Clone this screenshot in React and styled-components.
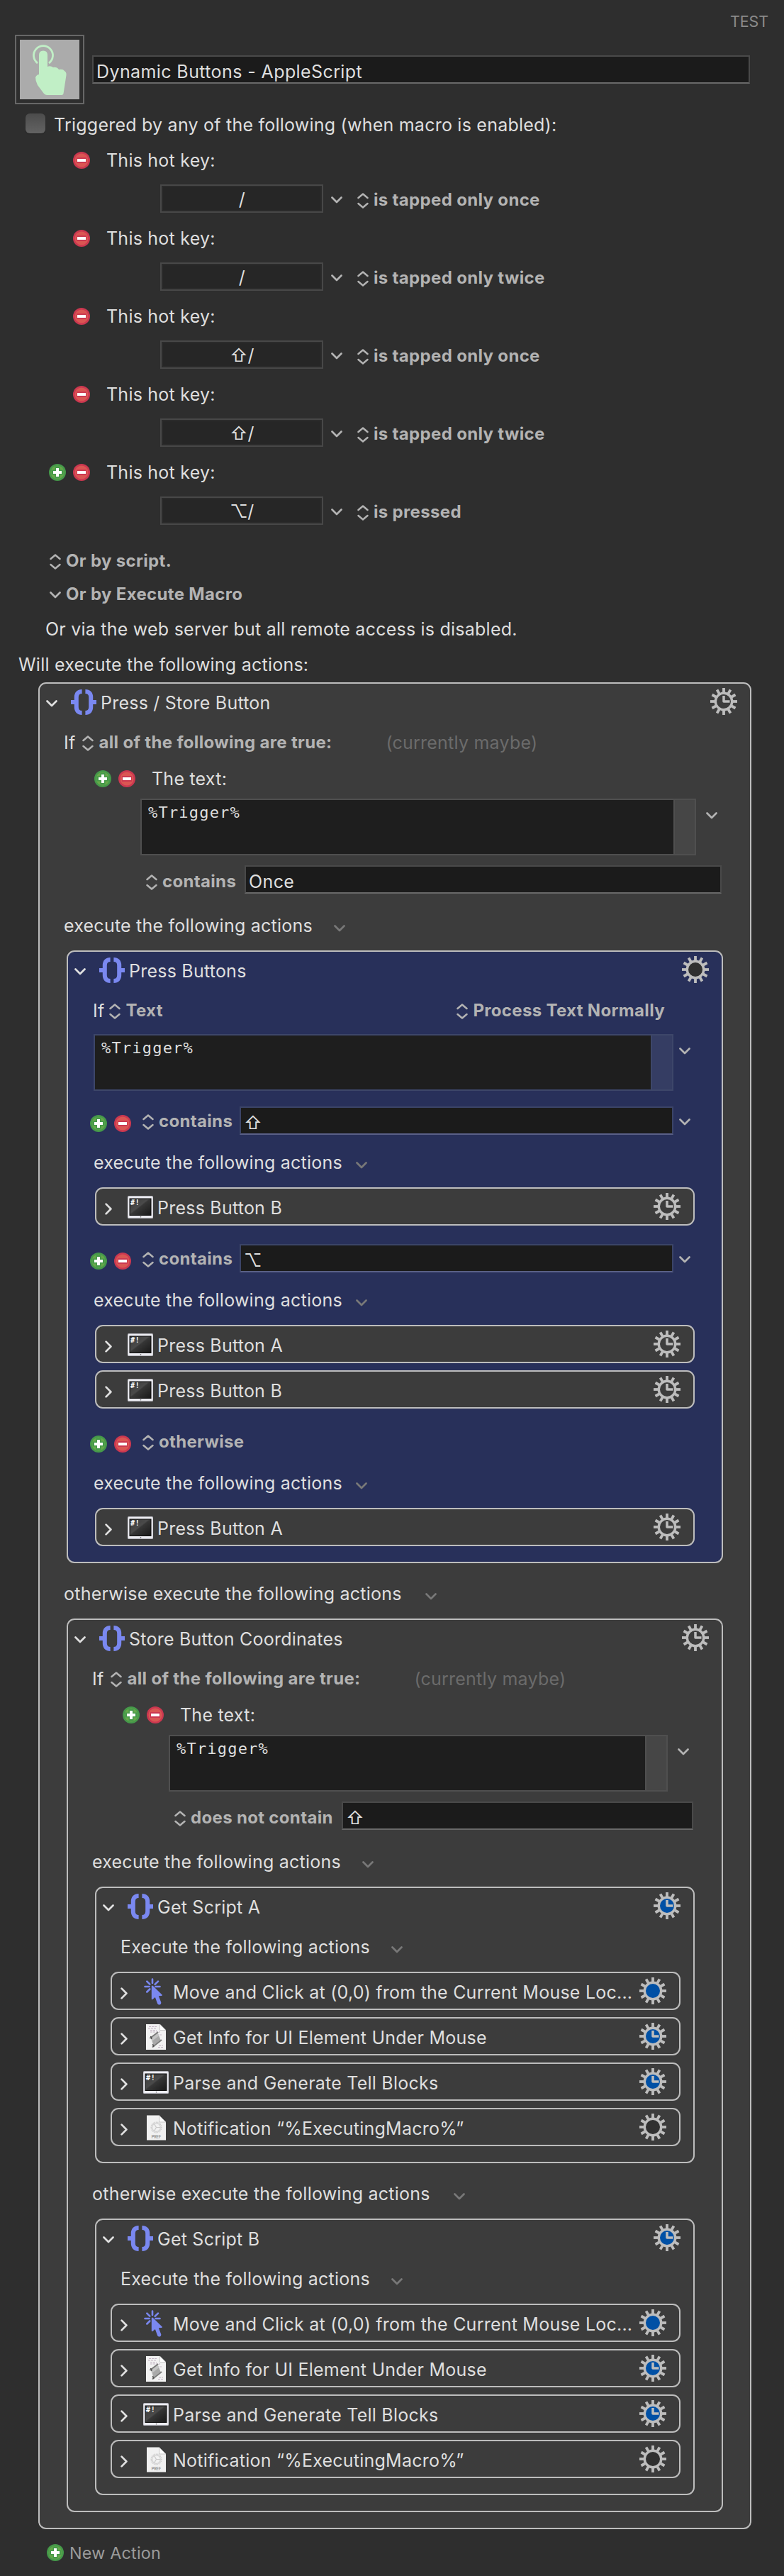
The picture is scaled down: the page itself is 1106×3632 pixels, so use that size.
import React from 'react';
import styled, { createGlobalStyle, css } from 'styled-components';

const GlobalStyle = createGlobalStyle`
  *, *::before, *::after { box-sizing: border-box; }
  body { margin: 0; background: #2e2e2e; }
`;

const Page = styled.main`
  width: 1106px;
  height: 3632px;
  overflow: hidden;
  background: #2e2e2e;
  color: #dfdfdf;
  font-family: Inter, "DejaVu Sans", sans-serif;
  font-size: 25px;
  letter-spacing: 0.23px;
  line-height: 30px;
  white-space: nowrap;
`;

const GroupName = styled.div`
  height: 49px;
  padding: 15px 22px 0 0;
  text-align: right;
  font-size: 21.5px;
  letter-spacing: -0.1px;
  color: #8b8b8b;
`;

const TitleRow = styled.header`
  display: flex;
  align-items: center;
  gap: 11px;
  height: 98px;
  padding-left: 21px;
`;

const IconWell = styled.div`
  display: flex;
  align-items: center;
  justify-content: center;
  width: 98px;
  height: 98px;
  border: 2px solid #676767;
`;

const IconPlate = styled.div`
  width: 84px;
  height: 84px;
  background: #ababab;
`;

const fieldTone = {
  grey: { line: '#494949', base: '#696969', area: '#4f4f4f', bar: '#464646' },
  blue: { line: '#3b4467', base: '#5a6087', area: '#3d4669', bar: '#353d63' },
};

const Field = styled.div`
  display: flex;
  align-items: center;
  width: ${(p) => p.$w}px;
  height: 40px;
  padding: 5px 0 0 4px;
  border: 2px solid ${(p) => fieldTone[p.$tone || 'grey'].line};
  border-bottom-color: ${(p) => fieldTone[p.$tone || 'grey'].base};
  background: #1b1b1b;
  letter-spacing: 0.4px;
`;

const HotKeyField = styled.div`
  display: flex;
  align-items: center;
  justify-content: center;
  width: 230px;
  height: 40px;
  padding-top: 2px;
  border: 2px solid #484848;
  background: #262626;
  box-shadow: inset 0 0 0 2px #2b2b2b;
  letter-spacing: -0.5px;
`;

const Line = styled.div`
  display: flex;
  align-items: center;
  flex: none;
  height: ${(p) => p.$h}px;
  padding-top: ${(p) => p.$top || 0}px;
  padding-bottom: ${(p) => p.$bottom || 0}px;
  padding-left: ${(p) => p.$x || 0}px;
`;

const Checkbox = styled.span`
  width: 28px;
  height: 28px;
  margin: 0 12px 4px 0;
  border-radius: 6px;
  background: linear-gradient(#4c4c4c, #636363);
  box-shadow: 0 1px 1px #262626;
`;

const MenuRoot = styled.span`
  display: inline-flex;
  align-items: center;
  gap: 7px;
  margin-left: ${(p) => p.$ml || 0}px;
  padding-top: ${(p) => p.$drop || 0}px;
  font-size: 24px;
  font-weight: 700;
  letter-spacing: 0.33px;
  color: #b3b3b3;
`;

const Gap = styled.span`
  flex: none;
  width: ${(p) => p.$w}px;
`;

const Push = styled.span`
  flex: 1;
`;

const Dim = styled.span`
  margin-left: 76px;
  color: #6b6b6b;
`;

const Glyph = styled.svg`
  display: block;
  flex: none;
  margin-top: ${(p) => p.$mt || 0}px;
  margin-left: ${(p) => p.$ml || 0}px;
`;

const Stack = styled.div`
  margin-left: ${(p) => p.$x}px;
  display: flex;
  align-items: center;
`;

const TextArea = styled.div`
  display: flex;
  width: ${(p) => p.$w}px;
  height: 80px;
  border: 2px solid ${(p) => fieldTone[p.$tone].area};
  background: #1e1e1e;
`;

const AreaText = styled.div`
  flex: 1;
  padding: 3px 0 0 9px;
  font-family: "DejaVu Sans Mono", monospace;
  font-size: 22px;
  letter-spacing: 1.2px;
`;

const AreaScroller = styled.div`
  width: 30px;
  border-left: 2px solid ${(p) => fieldTone[p.$tone].area};
  background: ${(p) => fieldTone[p.$tone].bar};
`;

const Card = styled.section`
  border: 2px solid #bdbdbd;
  border-radius: 11px;
  background: ${(p) => (p.$selected ? '#28305a' : '#3c3c3c')};
  margin: 0 ${(p) => p.$mr ?? p.$mx}px 0 ${(p) => p.$mx}px;
  ${(p) => p.$outer && css`
    width: 1006px;
    margin: 0 0 0 54px;
  `}
`;

const CardHead = styled.div`
  display: flex;
  align-items: center;
  height: 50px;
  margin-bottom: ${(p) => (p.$closed ? 0 : 2)}px;
  padding: 0 18px 0 9px;
`;

const Disclosure = styled.span`
  display: flex;
  justify-content: center;
  width: 16px;
  padding-top: 6px;
`;

const IconCell = styled.span`
  display: flex;
  align-items: center;
  justify-content: center;
  width: 36px;
  height: 38px;
  margin: 2px 6px 0 19px;
`;

const Title = styled.span`
  flex: 1;
  padding-top: 4px;
`;

const List = styled.div`
  display: flex;
  flex-direction: column;
  gap: 10px;
`;

const Foot = styled.div`
  height: ${(p) => p.$h}px;
`;

const ChevronDown = ({ color = '#b3b3b3', mt = 0, ml = 0 }) => (
  <Glyph $mt={mt} $ml={ml} width="16" height="10" viewBox="0 0 16 10" fill="none" stroke={color} strokeWidth="2.7" strokeLinecap="round" strokeLinejoin="round">
    <path d="M1.5 1.5 8 8 14.5 1.5" />
  </Glyph>
);

const ChevronRight = () => (
  <Glyph width="10" height="17" viewBox="0 0 10 17" fill="none" stroke="#e0e0e0" strokeWidth="2.7" strokeLinecap="round" strokeLinejoin="round">
    <path d="M1.6 1.6 8.4 8.5 1.6 15.4" />
  </Glyph>
);

const UpDown = () => (
  <Glyph $mt={2} width="16" height="22" viewBox="0 0 16 22" fill="none" stroke="#b3b3b3" strokeWidth="2.5" strokeLinecap="round" strokeLinejoin="round">
    <path d="M1.5 7 8 1.5 14.5 7M1.5 15 8 20.5 14.5 15" />
  </Glyph>
);

const Menu = ({ children, ml, drop }) => (
  <MenuRoot $ml={ml} $drop={drop}>
    <UpDown />
    {children}
  </MenuRoot>
);

const Plus = () => (
  <Glyph width="24" height="24" viewBox="0 0 24 24">
    <circle cx="12" cy="12" r="12" fill="#45994a" />
    <circle cx="12" cy="12" r="9.5" fill="#66a84a" />
    <path d="M8.5 3.5h7v5h5v7h-5v5h-7v-5h-5v-7h5z" fill="#45994a" />
    <path d="M10 6h4v4h4v4h-4v4h-4v-4H6v-4h4z" fill="#fff" />
  </Glyph>
);

const Minus = () => (
  <Glyph width="24" height="24" viewBox="0 0 24 24">
    <circle cx="12" cy="12" r="12" fill="#cc3850" />
    <circle cx="12" cy="12" r="9.5" fill="#da5653" />
    <path d="M5 8h14v8H5z" fill="#cc3850" />
    <path d="M6 10h12v4H6z" fill="#fff" />
  </Glyph>
);

const PlusMinus = ({ x }) => (
  <Line $h={24} $x={x}>
    <Plus />
    <Gap $w={10} />
    <Minus />
  </Line>
);

const Braces = () => (
  <Glyph width="36" height="36" viewBox="0 0 36 36" fill="none" stroke="#7a88f0" strokeWidth="6">
    <path d="M15.6 3C10.5 3 7.8 6 7.8 11v14c0 5 2.7 8 7.8 8M20.4 3c5.1 0 7.8 3 7.8 8v14c0 5-2.7 8-7.8 8M0 18h9M27 18h9" />
  </Glyph>
);

const Terminal = () => (
  <Glyph width="36" height="32" viewBox="0 0 36 32">
    <defs>
      <linearGradient id="screen" x1="0" y1="0" x2="1" y2="1">
        <stop offset="0" stopColor="#3a3a3a" />
        <stop offset="0.45" stopColor="#4a4a4a" />
        <stop offset="0.5" stopColor="#363636" />
        <stop offset="1" stopColor="#181818" />
      </linearGradient>
    </defs>
    <rect width="36" height="32" rx="1.5" fill="#b4b4bb" />
    <rect x="0.5" y="1" width="35" height="30" rx="1.5" fill="#ececf2" />
    <rect x="3" y="4" width="30" height="23.5" fill="url(#screen)" stroke="#0c0c0c" />
    <text x="4" y="13" fill="#fff" fontFamily="DejaVu Sans Mono, monospace" fontSize="10" fontWeight="700" letterSpacing="0.8">#!</text>
    <circle cx="18.5" cy="29.8" r="0.8" fill="#666" />
  </Glyph>
);

const ClickCursor = () => (
  <Glyph $ml={-9} width="26" height="38" viewBox="0 0 26 38">
    <path d="M12 1.5v5.500M1.5 12h6M16.500 12h6M4.300 4.600l4 4M20 4.600l-4.300 4.200M4.300 19.500l4-4" stroke="#7a88f0" strokeWidth="2.6" strokeLinecap="round" />
    <path d="M10.800 11.300v18.200q.4 1.200 1.500.6l3.600-3.200 3.200 9q1.300 2.200 3.600 1.500 2-1 1.500-3.300l-3.400-8.800 4.300-.3q1.200-.6.500-1.600L12.600 10.800q-1.500-.6-1.800.5z" fill="#7a88f0" />
  </Glyph>
);

const ScriptDoc = () => (
  <Glyph width="28" height="38" viewBox="0 0 28 38">
    <path d="M0 1h19.500L28 9.500V37H0z" fill="#f2f2f2" />
    <path d="M19.500 1v8.500H28z" fill="#fff" stroke="#aaa" strokeWidth="0.6" />
    <path d="M4 4.500h11M3 7h12M6 9.500h9M6 12h14M16 16h6M18 31h6M17 33.500h8M5 20h4" stroke="#c3b4c4" strokeWidth="1" strokeDasharray="3 1" />
    <path d="M6.500 20 16.500 12.500 20.500 23 10.500 31z" fill="#c4c4c4" />
    <path d="M9 24.500 18 17.500 20.500 23 10.500 31z" fill="#a9a9a9" />
    <path d="M6 20.500 16.500 12.500M9.500 33 21.500 23.500" fill="none" stroke="#7c7c7c" strokeWidth="2" strokeLinecap="round" />
    <path d="M6 18.500q2.500.500 1.500 3.500M9 29.500q2 1 1.500 3.500" fill="none" stroke="#555" strokeWidth="1.6" />
  </Glyph>
);

const PrefDoc = () => (
  <Glyph width="27" height="36" viewBox="0 0 27 36">
    <path d="M0 .5h17.500L27 10v25.500H0z" fill="#f1f1f1" />
    <path d="M17.500.5V10H27z" fill="#fdfdfd" stroke="#b5b5b5" strokeWidth="0.7" />
    <circle cx="13.500" cy="17.500" r="7.200" fill="none" stroke="#cfcfcf" strokeWidth="1.7" strokeDasharray="1.4 0.8" />
    <circle cx="13.500" cy="17.500" r="5.800" fill="none" stroke="#d2d2d2" strokeWidth="1.2" />
    <path d="M13.500 17.500H19M13.500 17.500l-3-5M13.500 17.500l-3 5" stroke="#c8c8c8" strokeWidth="1.2" />
    <text x="13.500" y="33" textAnchor="middle" fill="#8a8a8a" fontFamily="Inter, sans-serif" fontSize="5.5" fontWeight="600" letterSpacing="0">PREF</text>
  </Glyph>
);

const icons = { braces: Braces, terminal: Terminal, cursor: ClickCursor, script: ScriptDoc, pref: PrefDoc };

const Gear = ({ fill = 'none', hands = true }) => (
  <Glyph width="38" height="38" viewBox="-19 -19 38 38" stroke="#bdbdbd">
    {Array.from({ length: 12 }, (_, i) => (
      <path key={i} d="M0 -12V-19" strokeWidth="3.8" transform={`rotate(${i * 30})`} />
    ))}
    <circle r="11.7" fill={fill} strokeWidth="3.4" />
    {hands && <path d="M0 -8V0H8.5" fill="none" strokeWidth="3.5" strokeLinejoin="round" />}
  </Glyph>
);

const Header = ({ icon = 'braces', title, closed, gear }) => {
  const Icon = icons[icon];
  return (
    <CardHead $closed={closed}>
      <Disclosure>{closed ? <ChevronRight /> : <ChevronDown color="#e0e0e0" />}</Disclosure>
      <IconCell><Icon /></IconCell>
      <Title>{title}</Title>
      <Gear {...gear} />
    </CardHead>
  );
};

const BLUE = '#0050a5';

const Item = ({ mx, mr, ...rest }) => (
  <Card $mx={mx} $mr={mr}>
    <Header closed {...rest} />
  </Card>
);

const HotKey = ({ plus, keys, mode }) => (
  <>
    <Line $h={52} $x={plus ? 69 : 103}>
      {plus && (
        <>
          <Plus />
          <Gap $w={10} />
        </>
      )}
      <Minus />
      <Gap $w={23} />
      This hot key:
    </Line>
    <Line $h={58} $x={226} $bottom={2}>
      <HotKeyField>{keys}</HotKeyField>
      <ChevronDown mt={4} ml={11} />
      <Menu ml={21} drop={3}>{mode}</Menu>
    </Line>
  </>
);

const Execute = ({ x, h, top, bottom, gap = 30, children }) => (
  <Line $x={x} $h={h} $top={top} $bottom={bottom}>
    {children}
    <ChevronDown color="#787878" mt={8} ml={gap} />
  </Line>
);

const TriggerText = ({ x, w, tone = 'grey', gap }) => (
  <Stack $x={x}>
    <TextArea $w={w} $tone={tone}>
      <AreaText>%Trigger%</AreaText>
      <AreaScroller $tone={tone} />
    </TextArea>
    <ChevronDown mt={-32} ml={gap} />
  </Stack>
);

const AllTrue = () => (
  <Line $h={62} $x={34}>
    If
    <Menu ml={10}>all of the following are true:</Menu>
    <Dim>(currently maybe)</Dim>
  </Line>
);

const TextCondition = ({ areaWidth, label, fieldWidth, value }) => (
  <>
    <Line $h={40} $x={77}>
      <PlusMinus />
      <Gap $w={23} />
      The text:
    </Line>
    <Foot $h={8} />
    <TriggerText x={142} w={areaWidth} gap={14} />
    <Line $h={54} $top={14} $x={150}>
      <Menu drop={6}>{label}</Menu>
      <Push />
      <Field $w={fieldWidth}>{value}</Field>
      <Gap $w={40} />
    </Line>
  </>
);

const Case = ({ label, value }) => (
  <>
    <Line $h={40} $x={31}>
      <Line $h={40} $top={8}>
        <PlusMinus />
      </Line>
      <Menu ml={16} drop={2}>{label}</Menu>
      {value && (
        <>
          <Push />
          <Field $w={612} $tone="blue">{value}</Field>
          <ChevronDown mt={4} ml={8} />
          <Gap $w={44} />
        </>
      )}
    </Line>
    <Execute x={36} h={74} top={3} gap={19}>execute the following actions</Execute>
  </>
);

const ScriptGroup = ({ name }) => (
  <Card $mx={38}>
    <Header title={`Get Script ${name}`} gear={{ fill: BLUE }} />
    <Execute x={34} h={66} bottom={4}>Execute the following actions</Execute>
    <List>
      <Item mx={20} mr={18} icon="cursor" title="Move and Click at (0,0) from the Current Mouse Loc..." gear={{ fill: BLUE, hands: false }} />
      <Item mx={20} mr={18} icon="script" title="Get Info for UI Element Under Mouse" gear={{ fill: BLUE }} />
      <Item mx={20} mr={18} icon="terminal" title="Parse and Generate Tell Blocks" gear={{ fill: BLUE }} />
      <Item mx={20} mr={18} icon="pref" title="Notification “%ExecutingMacro%”" gear={{ fill: '#303030', hands: false }} />
    </List>
    <Foot $h={22} />
  </Card>
);

const NewAction = styled.span`
  margin-left: 8px;
  padding-top: 1px;
  font-size: 23.3px;
  color: #9b9b9b;
`;

export default function App() {
  return (
    <Page>
      <GlobalStyle />
      <GroupName>TEST</GroupName>
      <TitleRow>
        <IconWell>
          <IconPlate>
            <svg width="84" height="84" viewBox="0 0 84 84">
              <path d="M25 33A13.5 13.5 0 1 1 41 33" fill="none" stroke="#c1efc6" strokeWidth="2.8" />
              <path d="M27 21.500q0-6 6-6t6 6V38q4-2 8 1 5-1 8 3 6-1 8 2 3 2 2.500 6l-4 26q-.5 2-2.500 2H38q-2 0-4-2L25 64q-3-6-3-11 2-4 5-4z" fill="#c1efc6" />
            </svg>
          </IconPlate>
        </IconWell>
        <Field $w={928}>Dynamic Buttons - AppleScript</Field>
      </TitleRow>
      <Foot $h={5} />
      <Line $h={48} $x={36}>
        <Checkbox />
        Triggered by any of the following (when macro is enabled):
      </Line>
      <HotKey keys="/" mode="is tapped only once" />
      <HotKey keys="/" mode="is tapped only twice" />
      <HotKey keys="⇧/" mode="is tapped only once" />
      <HotKey keys="⇧/" mode="is tapped only twice" />
      <HotKey plus keys="⌥/" mode="is pressed" />
      <Line $h={64} $top={18} $x={70}>
        <Menu>Or by script.</Menu>
      </Line>
      <Line $h={48} $x={70}>
        <MenuRoot>
          <ChevronDown mt={2} />
          Or by Execute Macro
        </MenuRoot>
      </Line>
      <Line $h={49} $x={64}>Or via the web server but all remote access is disabled.</Line>
      <Line $h={51} $x={26}>Will execute the following actions:</Line>

      <Card $outer>
        <Header title="Press / Store Button" />
        <AllTrue />
        <TextCondition areaWidth={784} label="contains" fieldWidth={673} value="Once" />
        <Execute x={34} h={80} top={9}>execute the following actions</Execute>

        <Card $selected $mx={38}>
          <Header title="Press Buttons" gear={{ fill: '#303030', hands: false }} />
          <Line $h={62} $x={35}>
            If
            <Menu ml={7}>Text</Menu>
            <Push />
            <Menu>Process Text Normally</Menu>
            <Gap $w={80} />
          </Line>
          <Foot $h={2} />
          <TriggerText x={36} w={818} tone="blue" gap={8} />
          <Foot $h={22} />
          <Case label="contains" value="⇧" />
          <Item mx={38} icon="terminal" title="Press Button B" />
          <Foot $h={26} />
          <Case label="contains" value="⌥" />
          <List>
            <Item mx={38} icon="terminal" title="Press Button A" />
            <Item mx={38} icon="terminal" title="Press Button B" />
          </List>
          <Foot $h={26} />
          <Case label="otherwise" />
          <Item mx={38} icon="terminal" title="Press Button A" />
          <Foot $h={22} />
        </Card>

        <Execute x={34} h={78} top={7} gap={33}>otherwise execute the following actions</Execute>

        <Card $mx={38}>
          <Header title="Store Button Coordinates" />
          <AllTrue />
          <TextCondition areaWidth={704} label="does not contain" fieldWidth={496} value="⇧" />
          <Execute x={34} h={80} top={9}>execute the following actions</Execute>
          <ScriptGroup name="A" />
          <Execute x={34} h={78} top={7} gap={33}>otherwise execute the following actions</Execute>
          <ScriptGroup name="B" />
          <Foot $h={22} />
        </Card>
        <Foot $h={22} />
      </Card>

      <Line $h={66} $x={66}>
        <Plus />
        <NewAction>New Action</NewAction>
      </Line>
    </Page>
  );
}
